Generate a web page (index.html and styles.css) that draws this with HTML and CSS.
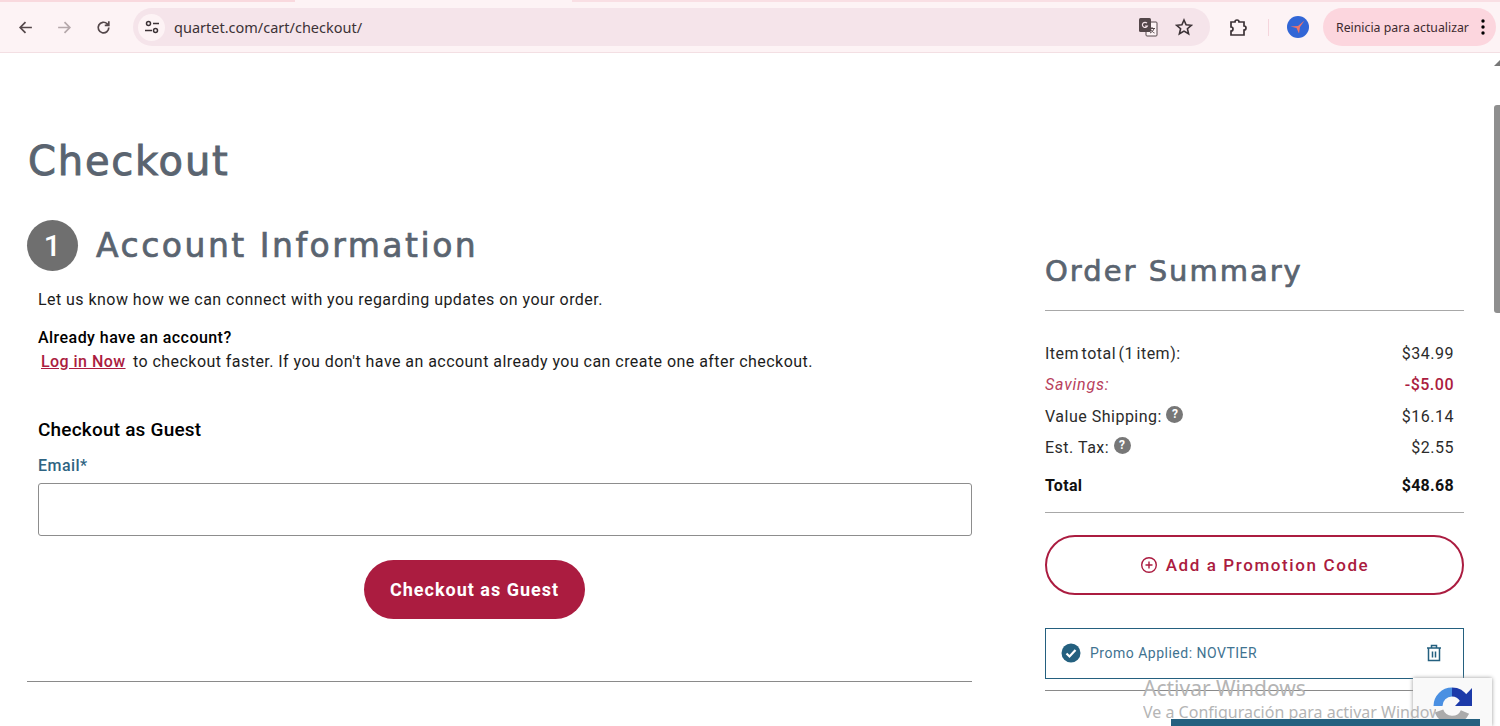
FILE: index.html
```html
<!DOCTYPE html>
<html lang="en">
<head>
    <meta charset="UTF-8">
    <meta name="viewport" content="width=device-width, initial-scale=1.0">
    <title>Checkout</title>
    <link rel="stylesheet" href="styles.css">
</head>
<body>
    <div class="browser-bar">
        <div class="tab-strip"></div>
        <div class="toolbar">
            <svg class="nav-icon" viewBox="0 0 16 16"><path d="M14 8H3M8 3 3 8l5 5" fill="none" stroke="#54474a" stroke-width="1.6"/></svg>
            <svg class="nav-icon" viewBox="0 0 16 16"><path d="M2 8h11M8 3l5 5-5 5" fill="none" stroke="#b5a8ab" stroke-width="1.6"/></svg>
            <svg class="nav-icon" viewBox="0 0 16 16"><path d="M13 8a5 5 0 1 1-1.5-3.5L13 6M13 2.2V6H9.2" fill="none" stroke="#54474a" stroke-width="1.6"/></svg>
            <div class="omnibox">
                <span class="site-chip">
                    <svg width="16" height="16" viewBox="0 0 16 16"><g fill="none" stroke="#3c3236" stroke-width="1.5"><circle cx="4.5" cy="4.5" r="2"/><path d="M9 4.5h6M1 11.5h7"/><circle cx="11.5" cy="11.5" r="2"/></g></svg>
                </span>
                <span class="url">quartet.com/cart/checkout/</span>
                <svg class="translate" width="20" height="20" viewBox="0 0 20 20"><rect x="8" y="5" width="11" height="14" rx="1" fill="#fdf3f5" stroke="#54474a"/><rect x="1" y="1" width="12" height="14" rx="1.5" fill="#54474a"/><path d="M9 6.2A2.6 2.6 0 1 0 9.4 9H7" fill="none" stroke="#f5e4ea" stroke-width="1.2"/><path d="M14 10v1.5M11.5 11.5H17M16 11.5c-.5 2-2 3.6-4 4.5M13 12.5c.6 1.4 2 3 3.5 3.5" fill="none" stroke="#54474a"/></svg>
                <svg class="star" width="18" height="18" viewBox="0 0 18 18"><path d="m9 2 2.1 4.8 5.2.5-3.9 3.4 1.2 5.1L9 13.1l-4.6 2.7 1.2-5.1-3.9-3.4 5.2-.5z" fill="none" stroke="#3c3236" stroke-width="1.6"/></svg>
            </div>
            <svg class="puzzle" width="20" height="20" viewBox="0 0 20 20"><path d="M2 5h4a2 2 0 0 1 4 0h5v4a2 2 0 0 1 0 4v5H2v-4a2 2 0 0 0 0-4z" fill="none" stroke="#3c3236" stroke-width="1.7"/></svg>
            <span class="bar-divider"></span>
            <svg class="avatar" width="22" height="22" viewBox="0 0 22 22"><circle cx="11" cy="11" r="11" fill="#3266d6"/><path d="M17.5 4.5 13 11l-1 6.500-2.500-5.500L3.500 10.500 11 10z" fill="#ef7468"/></svg>
            <div class="restart-pill">
                <span>Reinicia para actualizar</span>
                <svg width="4" height="16" viewBox="0 0 4 16"><circle cx="2" cy="2" r="1.7"/><circle cx="2" cy="8" r="1.7"/><circle cx="2" cy="14" r="1.7"/></svg>
            </div>
        </div>
    </div>

    <div class="page">
        <div class="main-col">
            <h1 class="page-title">Checkout</h1>
            <div class="step-head">
                <span class="step-num">1</span>
                <h2 class="step-title">Account Information</h2>
            </div>
            <div class="step-body">
                <p class="intro">Let us know how we can connect with you regarding updates on your order.</p>
                <p class="have-account">Already have an account?</p>
                <p class="login-line"><a href="#" class="login-link">Log in Now</a> to checkout faster. If you don't have an account already you can create one after checkout.</p>
                <h3 class="guest-title">Checkout as Guest</h3>
                <label class="email-label" for="email">Email*</label>
                <input class="email-input" id="email" type="text">
                <div class="guest-action">
                    <button class="guest-btn">Checkout as Guest</button>
                </div>
            </div>
            <hr class="main-rule">
        </div>

        <aside class="summary">
            <h2 class="summary-title">Order Summary</h2>
            <div class="summary-lines">
                <div class="line"><span class="item-total">Item total (1 item):</span><span>$34.99</span></div>
                <div class="line savings"><em>Savings:</em><strong>-$5.00</strong></div>
                <div class="line"><span>Value Shipping: <span class="help">?</span></span><span>$16.14</span></div>
                <div class="line"><span>Est. Tax: <span class="help">?</span></span><span>$2.55</span></div>
                <div class="line total"><span>Total</span><span>$48.68</span></div>
            </div>
            <button class="promo-btn">
                <svg width="18" height="18" viewBox="0 0 18 18"><g fill="none" stroke="#ab1c40" stroke-width="1.4"><circle cx="9" cy="9" r="7.3"/><path d="M9 5.5v7M5.5 9h7"/></g></svg>
                Add a Promotion Code
            </button>
            <div class="promo-applied">
                <svg width="20" height="20" viewBox="0 0 20 20"><circle cx="10" cy="10" r="9.5" fill="#24607f"/><path d="m5.5 10.5 3 3 6-6.500" fill="none" stroke="#fff" stroke-width="2.2"/></svg>
                <span class="promo-text">Promo Applied: NOVTIER</span>
                <svg class="trash" width="16" height="18" viewBox="0 0 16 18"><g fill="none" stroke="#24607f" stroke-width="1.5"><path d="M1 4h14M5.500 4V1.500h5V4M2.500 4v12.500h11V4M6.500 7.500v6M9.500 7.500v6"/></g></svg>
            </div>
            <hr class="summary-end">
        </aside>
    </div>

    <div class="scroll-arrow"></div>
    <div class="scroll-thumb"></div>
    <div class="recaptcha">
        <svg width="44" height="44" viewBox="0 0 44 44">
            <g fill="none" stroke-width="9">
                <path d="M8 24a14 14 0 0 1 14-14" stroke="#4a90e2"/>
                <path d="M22 10a14 14 0 0 1 12 7" stroke="#1c3aa9"/>
                <path d="M9 29a14 14 0 0 0 26 1" stroke="#ababab"/>
            </g>
            <path d="M42 6v18H25z" fill="#1c3aa9"/>
        </svg>
    </div>
    <div class="activate">
        <div class="activate-title">Activar Windows</div>
        <div class="activate-sub">Ve a Configuración para activar Windows.</div>
    </div>
    <div class="checkout-strip"></div>
</body>
</html>
```

FILE: styles.css
```css
/* Base */
html, body {
    height: 100%;
}
body {
    margin: 0;
    height: 726px;
    overflow: hidden;
    background-color: #ffffff;
    color: #1c1c1c;
    font-family: "Roboto", "Liberation Sans", sans-serif;
    font-size: 16px;
    letter-spacing: 0.45px;
}

/* Browser chrome */
.browser-bar {
    height: 53px;
    background-color: #fdf3f5;
    border-bottom: 1px solid #f3dfe3;
    box-sizing: border-box;
    letter-spacing: 0;
}
.tab-strip {
    height: 2px;
    background: linear-gradient(to right, #f9d9de 295px, #fdf3f5 295px, #fdf3f5 572px, #f9dfe4 572px);
}
.toolbar {
    display: flex;
    align-items: center;
    height: 38px;
    margin-top: 6px;
    padding-left: 17px;
}
.nav-icon {
    width: 17px;
    height: 17px;
    margin-right: 22px;
}
.omnibox {
    display: flex;
    align-items: center;
    width: 1077px;
    height: 38px;
    margin-left: -1px;
    background-color: #f5e4ea;
    border-radius: 19px;
    box-sizing: border-box;
    padding-left: 5px;
}
.site-chip {
    display: flex;
    align-items: center;
    justify-content: center;
    width: 27px;
    height: 27px;
    background-color: #fdf3f5;
    border-radius: 50%;
}
.url {
    margin-left: 9px;
    flex-grow: 1;
    font-family: "Noto Sans", sans-serif;
    font-size: 14.5px;
    color: #3c3236;
}
.translate {
    margin-right: 17px;
}
.star {
    margin-right: 17px;
}
.puzzle {
    margin-left: 19px;
}
.bar-divider {
    width: 1px;
    height: 17px;
    margin: 0 18px 0 19px;
    background-color: #f5d5dc;
}
.restart-pill {
    display: flex;
    align-items: center;
    justify-content: space-between;
    width: 173px;
    height: 38px;
    margin-left: 14px;
    padding: 0 11px 0 13px;
    box-sizing: border-box;
    background-color: #fcd6de;
    border-radius: 19px;
    font-family: "Noto Sans", sans-serif;
    font-size: 12.3px;
    color: #3c2a2e;
}

/* Page columns */
.page {
    display: flex;
    padding-left: 27px;
}
.main-col {
    width: 945px;
}
.page-title {
    margin: 83px 0 0 1px;
    font-family: "DejaVu Sans", sans-serif;
    font-size: 40px;
    line-height: 50px;
    font-weight: 400;
    letter-spacing: 1.8px;
    color: #5a6470;
    -webkit-text-stroke: 0.9px #5a6470;
}
.step-head {
    display: flex;
    align-items: center;
    margin-top: 34px;
}
.step-num {
    display: flex;
    align-items: center;
    justify-content: center;
    width: 51px;
    height: 51px;
    border-radius: 50%;
    background-color: #6f6f6f;
    color: #ffffff;
    font-size: 30px;
    font-weight: 500;
}
.step-title {
    margin: 0 0 0 18px;
    font-family: "DejaVu Sans", sans-serif;
    font-size: 33px;
    font-weight: 400;
    letter-spacing: 2.5px;
    color: #5a6470;
    -webkit-text-stroke: 0.7px #5a6470;
}
.step-body {
    padding-left: 11px;
}
.intro {
    margin: 18px 0 0;
    line-height: 22px;
}
.have-account {
    margin: 16px 0 0;
    font-weight: 500;
    line-height: 22px;
    color: #000000;
}
.login-line {
    margin: 1px 0 0 3px;
    line-height: 24px;
}
.login-link {
    margin-right: 3px;
    color: #ab1c40;
    font-weight: 500;
}
.guest-title {
    margin: 43px 0 0;
    font-size: 19px;
    line-height: 26px;
    font-weight: 500;
    letter-spacing: 0.2px;
    color: #000000;
}
.email-label {
    display: block;
    margin-top: 12px;
    font-weight: 500;
    line-height: 22px;
    color: #2f6482;
}
.email-input {
    display: block;
    width: 934px;
    height: 53px;
    margin-top: 6px;
    box-sizing: border-box;
    background-color: #ffffff;
    border: 1px solid #8d8d8d;
    border-radius: 3px;
}
.guest-action {
    display: flex;
    justify-content: center;
    margin-top: 24px;
    padding-right: 61px;
}
.guest-btn {
    width: 221px;
    height: 59px;
    border: none;
    border-radius: 30px;
    background-color: #ab1c40;
    color: #ffffff;
    font-family: inherit;
    font-size: 18px;
    font-weight: 700;
    letter-spacing: 1px;
}
.main-rule {
    margin: 62px 0 0;
    border: none;
    border-top: 1px solid #8a8a8a;
}

/* Order summary */
.summary {
    width: 419px;
    margin-left: 73px;
}
.summary-title {
    margin: 198px 0 0;
    font-family: "DejaVu Sans", sans-serif;
    font-size: 29px;
    line-height: 40px;
    font-weight: 400;
    letter-spacing: 2px;
    color: #5a6470;
    -webkit-text-stroke: 0.7px #5a6470;
}
.summary-lines {
    margin-top: 19px;
    padding: 27px 10px 11px 0;
    border-top: 1px solid #a8a8a8;
    border-bottom: 1px solid #a8a8a8;
}
.line {
    display: flex;
    justify-content: space-between;
    height: 31.4px;
    line-height: 31.4px;
    letter-spacing: 0.5px;
    color: #2b2b2b;
}
.item-total {
    word-spacing: -2px;
}
.savings em {
    color: #b8405c;
    font-weight: 400;
    letter-spacing: 0.8px;
}
.savings strong {
    color: #ab1c40;
    font-weight: 500;
}
.total {
    margin-top: 6px;
    font-weight: 700;
    letter-spacing: 0.3px;
    color: #111111;
}
.help {
    display: inline-flex;
    align-items: center;
    justify-content: center;
    width: 17px;
    height: 17px;
    vertical-align: 4px;
    border-radius: 50%;
    background-color: #777777;
    color: #ffffff;
    font-size: 12px;
    font-weight: 700;
    letter-spacing: 0;
}
.promo-btn {
    display: flex;
    align-items: center;
    justify-content: center;
    gap: 8px;
    width: 100%;
    height: 60px;
    margin-top: 22px;
    background-color: #ffffff;
    border: 2px solid #ab1c40;
    border-radius: 30px;
    color: #ab1c40;
    font-family: inherit;
    font-size: 17px;
    font-weight: 500;
    letter-spacing: 1.6px;
}
.promo-applied {
    display: flex;
    align-items: center;
    height: 51px;
    margin-top: 33px;
    padding: 0 21px 0 15px;
    box-sizing: border-box;
    border: 1px solid #24607f;
}
.promo-text {
    flex-grow: 1;
    margin-left: 9px;
    font-size: 14px;
    letter-spacing: 0.5px;
    color: #3f7391;
}
.summary-end {
    margin: 11px 0 0;
    border: none;
    border-top: 1px solid #8a8a8a;
}

/* Things lying over the page */
.scroll-arrow {
    position: absolute;
    top: 60px;
    right: 0;
    border-left: 6px solid transparent;
    border-bottom: 6px solid #777777;
}
.scroll-thumb {
    position: absolute;
    top: 105px;
    right: 0;
    width: 6px;
    height: 208px;
    border-radius: 3px 0 0 3px;
    background-color: #8f8f8f;
}
.checkout-strip {
    position: absolute;
    left: 1171px;
    top: 719px;
    width: 309px;
    height: 7px;
    background-color: #24607f;
}
.recaptcha {
    position: absolute;
    left: 1413px;
    top: 678px;
    width: 79px;
    height: 48px;
    box-sizing: border-box;
    padding: 4px 0 0 17px;
    background-color: #f9f9f9;
    box-shadow: 0 0 4px #999999;
}
.activate {
    position: absolute;
    left: 1143px;
    top: 674px;
    color: #b5b5b5;
    font-family: "Noto Sans", sans-serif;
    letter-spacing: 0;
}
.activate-title {
    font-size: 21px;
    line-height: 28px;
}
.activate-sub {
    width: 293px;
    overflow: hidden;
    white-space: nowrap;
    font-size: 16px;
    line-height: 20px;
}
```
